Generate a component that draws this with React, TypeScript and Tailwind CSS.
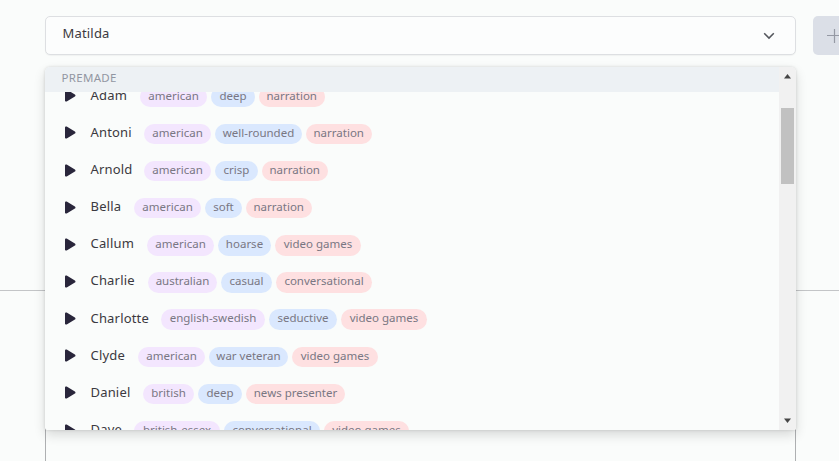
type Tag = [label: string, width: number];
type Voice = { name: string; nameWidth: number; tags: [Tag, Tag, Tag] };

const american: Tag = ['american', 67];
const narration: Tag = ['narration', 65.5];
const videoGames: Tag = ['video games', 86];

const voices: Voice[] = [
  { name: 'Adam', nameWidth: 49.5, tags: [american, ['deep', 44], narration] },
  { name: 'Antoni', nameWidth: 53.5, tags: [american, ['well-rounded', 87], narration] },
  { name: 'Arnold', nameWidth: 53.5, tags: [american, ['crisp', 43], narration] },
  { name: 'Bella', nameWidth: 43.5, tags: [american, ['soft', 37], narration] },
  { name: 'Callum', nameWidth: 56.5, tags: [american, ['hoarse', 53], videoGames] },
  { name: 'Charlie', nameWidth: 57.5, tags: [['australian', 69], ['casual', 51], ['conversational', 96]] },
  { name: 'Charlotte', nameWidth: 70.5, tags: [['english-swedish', 104], ['seductive', 68], videoGames] },
  { name: 'Clyde', nameWidth: 47.5, tags: [american, ['war veteran', 79], videoGames] },
  { name: 'Daniel', nameWidth: 52.5, tags: [['british', 51], ['deep', 44], ['news presenter', 99]] },
  { name: 'Dave', nameWidth: 43.5, tags: [['british-essex', 86], ['conversational', 96], ['video games', 85]] },
];

const tagColors = ['bg-[#f3e6fe]', 'bg-[#dae8fe]', 'bg-[#fee0e1]'];

function VoiceRow({ voice }: { voice: Voice }) {
  return (
    <li className="flex h-[37.15px] shrink-0 items-center pl-5">
      <svg className="mr-[14.5px] h-[13px] w-[11px] shrink-0" viewBox="0 0 11 13" fill="#29263b">
        <path d="M0 1.6C0 .6.9.1 1.7.6l8.2 4.8c.8.5.8 1.7 0 2.2l-8.2 4.8C.9 12.9 0 12.4 0 11.4Z" />
      </svg>
      <span
        className="shrink-0 whitespace-nowrap pb-[2px] text-[13px] leading-5 tracking-[0.18px] text-[#3b3940]"
        style={{ width: voice.nameWidth }}
      >
        {voice.name}
      </span>
      <div className="flex gap-1 pt-[2px]">
        {voice.tags.map(([label, width], i) => (
          <span
            key={label}
            className={`flex h-[20.5px] shrink-0 items-center justify-center whitespace-nowrap rounded-full pb-[2.5px] text-[11.5px] leading-4 text-[#797783] ${tagColors[i]}`}
            style={{ width }}
          >
            {label}
          </span>
        ))}
      </div>
    </li>
  );
}

export default function App() {
  return (
    <div className="relative h-[461px] w-[839px] overflow-hidden bg-[#fafcfb] font-['Noto_Sans',sans-serif]">
      <div className="flex gap-[17px] pl-[45px] pt-4">
        <div className="flex h-[39px] w-[751px] shrink-0 items-center justify-between rounded-[5px] border border-[#dddfe2] bg-[#fcfdfd] pl-[16.5px] pr-5 shadow-[0_1px_1px_rgba(0,0,0,0.04)]">
          <span className="pb-[6px] text-[13px] leading-5 tracking-[0.18px] text-[#3b3940]">Matilda</span>
          <svg className="h-3 w-3" viewBox="0 0 12 12" fill="none" stroke="#53565c" strokeWidth="1.5">
            <path d="m1.2 3.2 4.8 4.9 4.8-4.9" />
          </svg>
        </div>
        <button className="flex h-[39px] w-[80px] shrink-0 items-center rounded-[5px] bg-[#dbdfe7] pl-[14px]">
          <svg className="h-[14px] w-[14px]" viewBox="0 0 14 14" stroke="#9599a4" strokeWidth="1.2">
            <path d="M7.5 0v14M0 6.5h14" />
          </svg>
        </button>
      </div>
      <div className="mt-[235px] border-t border-[#c3c5c7]" />
      <div className="ml-[45px] h-[180px] w-[751px] border-x border-[#aeb0b2]" />

      <div className="absolute left-[45px] top-[67px] flex h-[363px] w-[751px] overflow-hidden rounded-[5px] rounded-b-[2px] bg-[#fafcfb] shadow-[0_5px_12px_rgba(0,0,0,0.14),0_0_3px_rgba(0,0,0,0.14)]">
        <div className="flex min-w-0 flex-1 flex-col">
          <div className="flex h-[25px] shrink-0 items-center bg-[#edf1f4] pb-[3px] pl-[16.5px] text-[11.5px] leading-4 tracking-[0.3px] text-[#9296a2]">
            PREMADE
          </div>
          <div className="min-h-0 flex-1 overflow-hidden">
            <ul className="-mt-[14.8px] flex flex-col">
              {voices.map((voice) => (
                <VoiceRow key={voice.name} voice={voice} />
              ))}
            </ul>
          </div>
        </div>
        <div className="flex w-[17px] shrink-0 flex-col items-center justify-between bg-[#f1f1f1] pb-[7px] pt-[7px]">
          <svg className="h-[5px] w-[7px]" viewBox="0 0 7 5" fill="#454545">
            <path d="M3.5 0 7 4.5H0Z" />
          </svg>
          <div className="mb-auto mt-[29px] h-[76px] w-[13px] bg-[#c1c1c1]" />
          <svg className="h-[5px] w-[7px]" viewBox="0 0 7 5" fill="#454545">
            <path d="M0 .5h7L3.5 5Z" />
          </svg>
        </div>
      </div>
    </div>
  );
}
